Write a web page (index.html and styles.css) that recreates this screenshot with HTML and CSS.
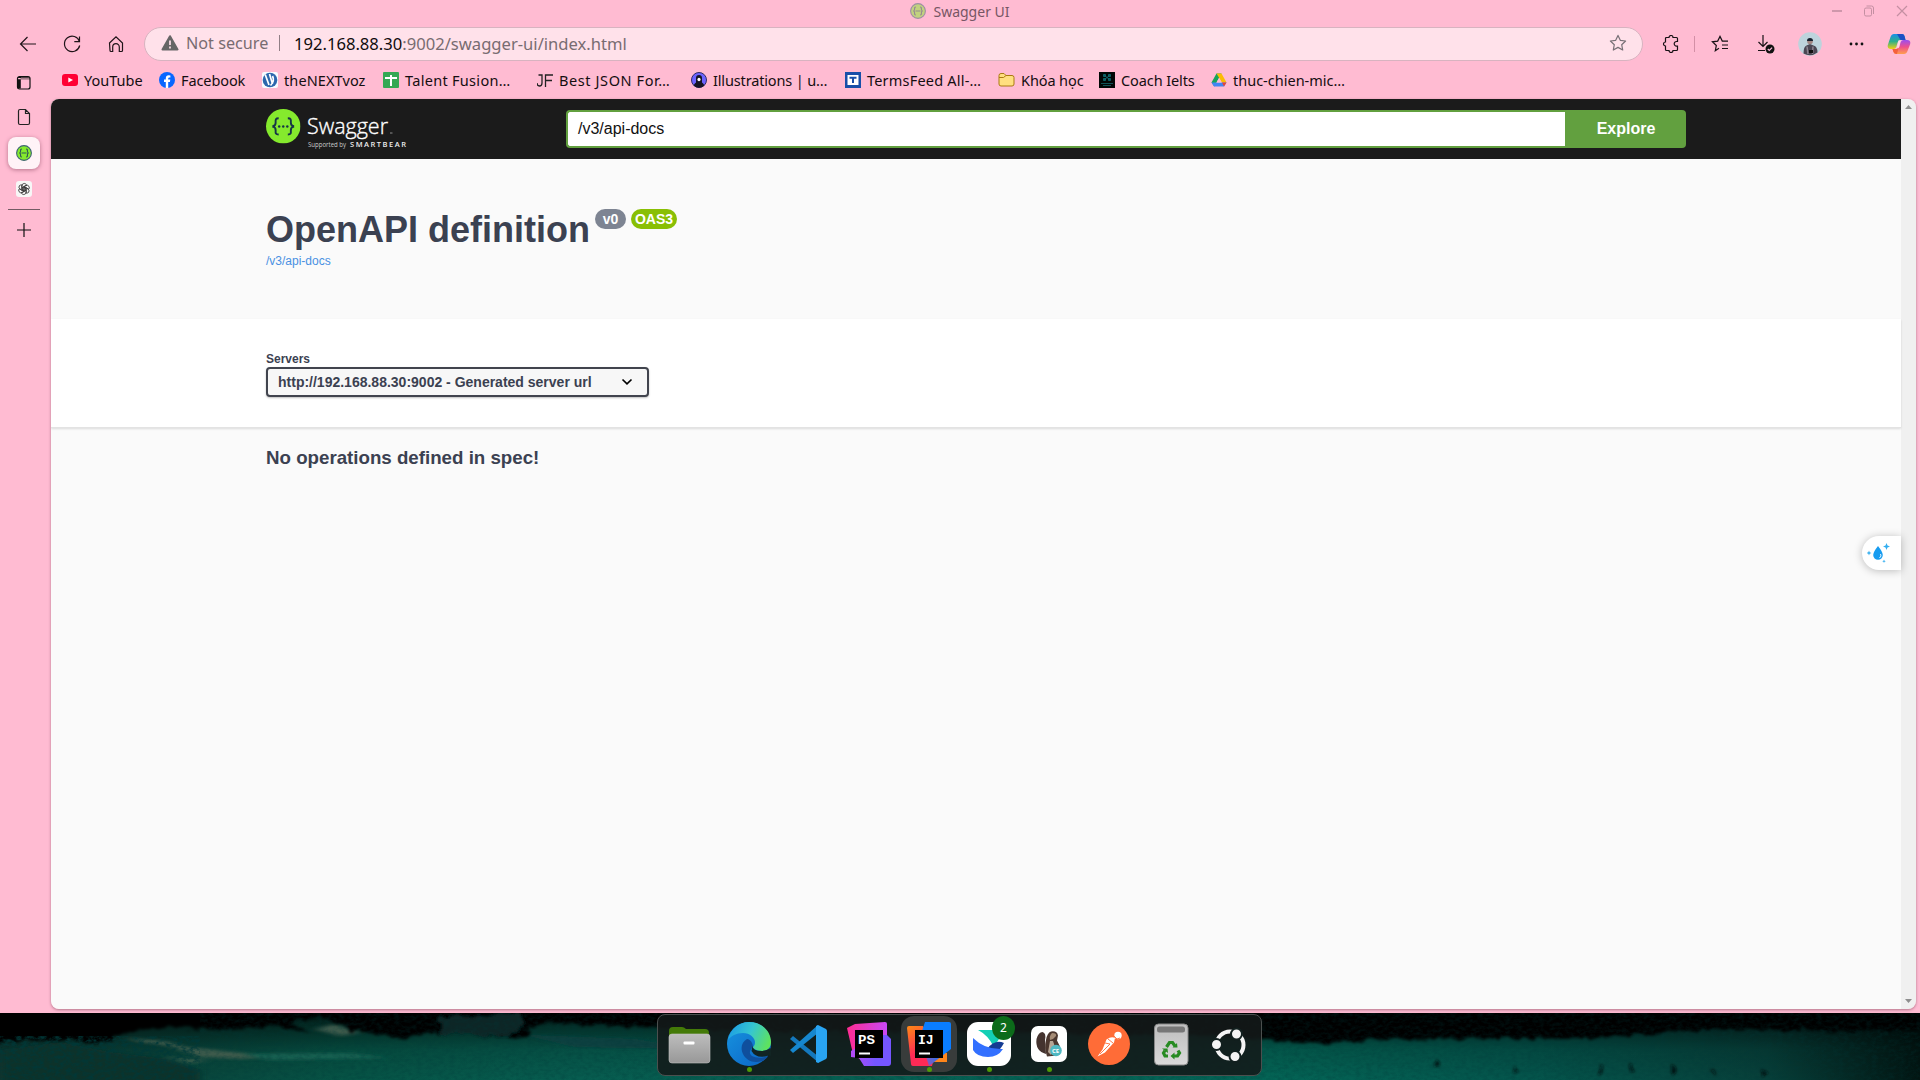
FILE: index.html
```html
<!DOCTYPE html>
<html lang="en">
<head>
<meta charset="utf-8">
<title>Swagger UI</title>
<link rel="stylesheet" href="styles.css">
</head>
<body>
<svg class="defs" width="0" height="0" aria-hidden="true">
  <defs>
    <symbol id="swagger" viewBox="0 0 34 34">
      <circle cx="17" cy="17" r="17" fill="#85ea2d"/>
      <path d="M12.5 9.2c-3 0-3.200 1.200-3 4 .1 2.400-.4 3.300-2.300 3.600v.8c1.900.3 2.400 1.200 2.300 3.600-.2 2.800 0 4 3 4M21.500 9.200c3 0 3.200 1.200 3 4-.1 2.400.4 3.300 2.300 3.600v.8c-1.900.3-2.400 1.200-2.300 3.600.2 2.800 0 4-3 4" fill="none" stroke="#173647" stroke-width="1.900"/>
      <g fill="#173647"><circle cx="13" cy="17.200" r="1.200"/><circle cx="17" cy="17.200" r="1.200"/><circle cx="21" cy="17.200" r="1.200"/></g>
    </symbol>
    <symbol id="swagger-tab" viewBox="0 0 16 16">
      <circle cx="8" cy="8" r="7.400" fill="#85ea2d" stroke="#3f6374" stroke-width="1.100"/>
      <path d="M6 4c-1.400 0-1.500.7-1.400 1.900C4.700 7.200 4.400 7.800 3.400 8c1 .2 1.300.8 1.200 2.100C4.500 11.300 4.600 12 6 12M10 4c1.400 0 1.500.7 1.400 1.900-.1 1.300.2 1.900 1.200 2.100-1 .2-1.300.8-1.200 2.100.1 1.200 0 1.900-1.400 1.900M5.500 8h5" fill="none" stroke="#315b54" stroke-width="1.200"/>
    </symbol>
    <linearGradient id="cop1" x1="0" y1="0" x2="0" y2="1"><stop offset="0" stop-color="#1b8fe8"/><stop offset=".5" stop-color="#2eb08a"/><stop offset="1" stop-color="#f2d011"/></linearGradient>
    <linearGradient id="cop2" x1="0" y1="0" x2="0" y2="1"><stop offset="0" stop-color="#9a4df0"/><stop offset=".5" stop-color="#f0508c"/><stop offset="1" stop-color="#ffa04c"/></linearGradient>
    <linearGradient id="edgeTop" x1="0" y1=".3" x2="1" y2=".6"><stop offset="0" stop-color="#1c9ee4"/><stop offset=".5" stop-color="#36c6d0"/><stop offset="1" stop-color="#5fe35b"/></linearGradient>
    <linearGradient id="edgeLow" x1="0" y1="0" x2="1" y2="1"><stop offset="0" stop-color="#1795e0"/><stop offset="1" stop-color="#0b62c4"/></linearGradient>
    <linearGradient id="ps1" x1="0" y1="0" x2="1" y2="0"><stop offset="0" stop-color="#ff2c91"/><stop offset="1" stop-color="#c948f7"/></linearGradient>
    <linearGradient id="ps2" x1="0" y1="0" x2="1" y2="0"><stop offset="0" stop-color="#b74af7"/><stop offset=".6" stop-color="#7556ff"/></linearGradient>
    <linearGradient id="ij1" x1="0" y1="0" x2=".4" y2="1"><stop offset="0" stop-color="#ff8a14"/><stop offset=".7" stop-color="#ff2a56"/></linearGradient>
    <linearGradient id="ij2" x1="1" y1="0" x2="0" y2="1"><stop offset=".5" stop-color="#0a7dff"/><stop offset=".85" stop-color="#8459c0"/><stop offset="1" stop-color="#fe2857"/></linearGradient>
    <linearGradient id="metal" x1="0" y1="0" x2="0" y2="1"><stop offset="0" stop-color="#bdbdbd"/><stop offset="1" stop-color="#989898"/></linearGradient>
    <linearGradient id="bin" x1="0" y1="0" x2="0" y2="1"><stop offset="0" stop-color="#bdbdbd"/><stop offset="1" stop-color="#dadada"/></linearGradient>
  </defs>
</svg>

<div class="browser">
  <header class="titlebar">
    <div class="title"><svg width="16" height="16"><use href="#swagger-tab"/></svg><span>Swagger UI</span></div>
    <svg class="window-buttons" width="80" height="16" viewBox="0 0 80 16" fill="none" stroke="#c48fa2">
      <path d="M4 8h10" stroke-width="1.600"/>
      <rect x="36.500" y="5" width="7" height="8" rx="1.500"/><path d="M38.500 3h5a2 2 0 0 1 2 2v6"/>
      <path d="M69 3l10 10M79 3L69 13" stroke-width="1.200"/>
    </svg>
  </header>

  <div class="toolbar">
    <svg class="nav" width="32" height="32" viewBox="0 0 32 32"><path d="M24 16H8.500M15.500 9l-7 7 7 7"/></svg>
    <svg class="nav" width="32" height="32" viewBox="0 0 32 32"><path d="M23.500 13.500a7.700 7.700 0 1 0 .2 4M23.500 8.500v5.200h-5.200"/></svg>
    <svg class="nav" width="32" height="32" viewBox="0 0 32 32"><path d="M9.500 15l6.500-6.200 6.500 6.200v7.500q0 1-1 1h-2.200v-4.500a3.300 3.300 0 0 0-6.600 0v4.500h-1.700q-1 0-1-1z"/></svg>
    <div class="address">
      <svg width="18" height="16" viewBox="0 0 18 16"><path d="M9 1.200L16.500 14.500h-15z" fill="#666" stroke="#666" stroke-width="2" stroke-linejoin="round"/><path d="M9 5.500v4.500M9 11.600v1.800" stroke="#ffe1ea" stroke-width="1.700"/></svg>
      <span class="security">Not secure</span>
      <span class="divider"></span>
      <span class="url"><b>192.168.88.30</b>:9002/swagger-ui/index.html</span>
      <svg class="star" width="18" height="18" viewBox="0 0 18 18"><path d="M9 1.400l2.300 4.900 5.300.7-3.900 3.700 1 5.300L9 13.400 4.300 16l1-5.300L1.400 7l5.300-.7z" fill="none" stroke="#777076" stroke-width="1.200" stroke-linejoin="round"/></svg>
    </div>
    <div class="actions">
      <svg class="puzzle" width="18" height="18" viewBox="0 0 18 18"><path d="M4.500 2.500H7a2 2 0 0 1 4 0h3.500q1 0 1 1V6.500h-1a2.300 2.300 0 1 0 0 4.600h1V14.500q0 1-1 1H11a2 2 0 0 1-4 0H4.500q-1 0-1-1V11a2 2 0 0 1 0-4V3.500q0-1 1-1z"/></svg>
      <span class="divider pinkish"></span>
      <svg class="favs" width="18" height="18" viewBox="0 0 18 18"><path d="M8 13.300l-3.700 2.500 1-5.300L1.400 6.800l5.300-.7L9 1.400l2.300 4.700H17M11 10h6M11 13.500h6"/></svg>
      <svg class="download" width="20" height="20" viewBox="0 0 20 20"><path d="M6 1v11M1.500 8L6 12.500 10.500 8M1 16.500h7"/><circle cx="13" cy="15" r="4.500" fill="#111" stroke="none"/><path d="M10.800 15l1.500 1.500 2.800-2.800" stroke="#fbd"/></svg>
      <svg class="avatar" width="24" height="24" viewBox="0 0 24 24"><circle cx="12" cy="12" r="11.800" fill="#bdd3dc" stroke="none"/><path d="M5.500 21.500q0-7 3-8l3.500-1.500 3.500 1.500q4 1 4 7-7 5-14 1z" fill="#4b4653" stroke="none"/><path d="M9 14.500l1 7.500M15 14.500l-.5 7.500" stroke="#8d8490" stroke-width="1.500"/><circle cx="12" cy="9.500" r="2.800" fill="#a08582" stroke="none"/><path d="M9 9a3 3 0 0 1 6 0z" fill="#16202e" stroke="none"/><path d="M11 18h4v3h-4z" fill="#111" stroke="none"/></svg>
      <svg class="more" width="16" height="6" viewBox="0 0 16 6"><g fill="#111" stroke="none"><circle cx="3" cy="3" r="1.400"/><circle cx="8.500" cy="3" r="1.400"/><circle cx="14" cy="3" r="1.400"/></g></svg>
      <svg class="copilot" width="24" height="22" viewBox="0 0 24 22"><g stroke="none"><path d="M7 1h8q2 0 2.500 2l1 4h-5q-2 0-2.700 2l-1.500 5q-.8 2-2.800 2H4q-4 0-3.200-4L3.500 4Q4.500 1 7 1z" fill="url(#cop1)"/><path d="M10 1h5q2 0 2.500 2l1 4h-5z" fill="#1c4fc4"/><path d="M17 21H9q-2 0-2.500-2l-1-3h4q2 0 2.700-2l1.500-5q.8-2 2.800-2H20q4 0 3.200 4L20.500 18Q19.500 21 17 21z" fill="url(#cop2)"/><path d="M5.500 16h4l2-1-1.500 6q-3 0-3.500-2z" fill="#f4603c"/><path d="M11.500 7.500h2L12 14.500h-2z" fill="#ffd9e4"/></g></svg>
    </div>
  </div>

  <div class="body">
    <aside class="tabs">
      <svg class="tabs-menu" width="16" height="16" viewBox="0 0 16 16"><rect x="1.500" y="1.500" width="12.500" height="12.500" rx="2" fill="none" stroke="#111" stroke-width="1.200"/><path d="M1.500 3v10.500h3.300V3zM2 2h12v2.200H2z" fill="#111"/><path d="M5 3.200h8.300" stroke="#ffbbd2" stroke-width=".9"/></svg>
      <svg class="page" width="14" height="18" viewBox="0 0 14 18"><path d="M3 1.500h5.500l4 4V15q0 1.500-1.500 1.500H3Q1.500 16.500 1.500 15V3Q1.500 1.500 3 1.500zM8.500 1.500v4h4" fill="none" stroke="#222" stroke-width="1.200"/></svg>
      <div class="active-tab"><svg width="16" height="16"><use href="#swagger-tab"/></svg></div>
      <svg class="gpt" width="16" height="16" viewBox="0 0 16 16"><rect width="16" height="16" rx="3" fill="#f7f7f7"/><g fill="none" stroke="#333" stroke-width=".8"><path id="petal" d="M6 9.200V5q0-2.600 2.200-2.600Q10 2.400 10.500 4L7 6v3"/><use href="#petal" transform="rotate(60 8 8)"/><use href="#petal" transform="rotate(120 8 8)"/><use href="#petal" transform="rotate(180 8 8)"/><use href="#petal" transform="rotate(240 8 8)"/><use href="#petal" transform="rotate(300 8 8)"/></g></svg>
      <span class="tabs-rule"></span>
      <svg class="plus" width="14" height="14" viewBox="0 0 14 14"><path d="M7 0v14M0 7h14" stroke="#111" stroke-width="1.200"/></svg>
    </aside>

    <div class="main">
      <nav class="bookmarks">
        <a class="bm yt"><svg width="16" height="16" viewBox="0 0 16 16"><rect y="2" width="16" height="12" rx="3" fill="#ff0033"/><path d="M6.300 5.500v5L11 8z" fill="#fff"/></svg>YouTube</a>
        <a class="bm fb"><svg width="16" height="16" viewBox="0 0 16 16"><circle cx="8" cy="8" r="8" fill="#0866ff"/><path d="M6.800 16V10H5V7.400h1.800V6.200q0-3 3-3 1 0 1.600.2v2.200h-1q-1.200 0-1.200 1v.8h2.100L10.900 10H9.200v6z" fill="#fff"/></svg>Facebook</a>
        <a class="bm voz"><svg width="16" height="16" viewBox="0 0 16 16"><rect width="16" height="16" rx="2" fill="#f8fbff"/><circle cx="8" cy="8" r="7.300" fill="#2c67ad"/><path d="M3.200 2.500L7 13M7.500 2L10.500 12M8.500 13.500Q13 9 10.500 4" fill="none" stroke="#fff" stroke-width="1.700"/></svg>theNEXTvoz</a>
        <a class="bm tf"><svg width="16" height="16" viewBox="0 0 16 16"><rect width="16" height="16" rx="1" fill="#34a853"/><path d="M2 6h12M8 3v11" stroke="#fff" stroke-width="2"/></svg>Talent Fusion…</a>
        <a class="bm jf"><svg width="16" height="16" viewBox="0 0 16 16"><path d="M0 11q0 3 2.500 3T5 11V3H1.500M8.500 15V3H16M8.500 8.500H15" fill="none" stroke="#222" stroke-width="1.300"/></svg>Best JSON For…</a>
        <a class="bm il"><svg width="16" height="16" viewBox="0 0 16 16"><circle cx="8" cy="8" r="7.500" fill="#6c63ff" stroke="#302d67"/><path d="M2.500 13.500Q4 11 5 10.500V6q0-3 3-3t3 3v4.500q1 .5 2.500 3Q8 18 2.500 13.500z" fill="#151525"/><ellipse cx="8" cy="7.500" rx="1.600" ry="1.800" fill="#fff"/></svg>Illustrations | u…</a>
        <a class="bm te"><svg width="16" height="16" viewBox="0 0 16 16"><rect width="16" height="16" fill="#184fa8"/><path d="M2.500 3h11v10h-11z" fill="#fff"/><path d="M4.500 5.800h7M8 5.800V11" stroke="#184fa8" stroke-width="2"/></svg>TermsFeed All-…</a>
        <a class="bm kh"><svg width="17" height="16" viewBox="0 0 17 16"><path d="M1 3.500Q1 1.500 3 1.500h3l2 2h6q2 0 2 2V12q0 2-2 2H3q-2 0-2-2z" fill="#ffdf80" stroke="#aa7b12"/><path d="M1 5.500h4.500l2.500-2" fill="none" stroke="#aa7b12"/></svg>Khóa học</a>
        <a class="bm co"><svg width="16" height="16" viewBox="0 0 16 16"><rect width="16" height="16" fill="#020707"/><path d="M5 3l6 5M11 3L5 8M4.500 2.500h2v2h-2zM9.500 2.500h2v2h-2zM4.500 6.500h2v2h-2zM9.500 6.500h2v2h-2z" fill="none" stroke="#127880" stroke-width=".8"/><path d="M2 11.500h12M4 13.500h8" stroke="#115257"/></svg>Coach Ielts</a>
        <a class="bm dr"><svg width="16" height="16" viewBox="0 0 16 16"><path d="M5.500 1.500h5L8 6 3.300 14.500 .5 10.500z" fill="#16a45a"/><path d="M5.500 1.500h5l5 9H11z" fill="#fbbc04"/><path d="M.5 10.500h15l-2.500 4H3z" fill="#4285f4"/><path d="M11 10.500h4.500l-2.500 4z" fill="#ea4335"/><path d="M8 6l2.500 4.500h-5z" fill="#ffbbd2"/></svg>thuc-chien-mic…</a>
      </nav>

      <div class="panel">
        <div class="page-view">
          <div class="topbar">
            <svg class="logo" width="150" height="44" viewBox="0 0 150 44">
              <use href="#swagger" x="0" y="0" width="34.500" height="34.500"/>
              <text class="logo-name" x="41" y="25" textLength="81" lengthAdjust="spacingAndGlyphs">Swagger</text>
              <path d="M124 24h2.500" stroke="#aaa" stroke-width=".8"/>
              <text class="logo-by" x="42" y="38" textLength="38" lengthAdjust="spacingAndGlyphs">Supported by</text>
              <text class="logo-bear" x="84" y="38" textLength="56">SMARTBEAR</text>
            </svg>
            <div class="spec-form"><div class="spec-url">/v3/api-docs</div><div class="explore">Explore</div></div>
          </div>
          <section class="info">
            <h2>OpenAPI definition</h2><span class="version">v0</span><span class="version oas">OAS3</span>
            <a class="spec-link">/v3/api-docs</a>
          </section>
          <section class="servers">
            <label>Servers</label>
            <div class="select"><span>http://192.168.88.30:9002 - Generated server url</span>
              <svg width="12" height="8" viewBox="0 0 12 8"><path d="M1.500 1.500L6 5.800l4.500-4.300" fill="none" stroke="#000" stroke-width="1.700"/></svg></div>
          </section>
          <h3 class="no-ops">No operations defined in spec!</h3>
          <div class="helper"><svg width="26" height="24" viewBox="0 0 26 24"><path d="M11 5q4.800 6 4.800 9a4.800 4.800 0 0 1-9.600 0q0-3 4.800-9z" fill="#179cf0"/><path d="M13.500 13q1.500 2-1 4" fill="none" stroke="#fff" stroke-width=".9"/><path d="M19.500 2l1 2.500 2.500 1-2.500 1-1 2.500-1-2.500-2.500-1 2.500-1zM2 9.500l.7 1.800 1.800.7-1.800.7L2 14.500l-.7-1.800L-.5 12l1.800-.7zM17 18.500l.5 1.300 1.300.5-1.300.5-.5 1.300-.5-1.300-1.300-.5 1.300-.5z" fill="#33aef0"/></svg></div>
        </div>
        <div class="scrollbar">
          <svg width="7" height="4" viewBox="0 0 7 4"><path d="M0 4L3.500 0 7 4z" fill="#8e8e8e"/></svg>
          <svg width="7" height="4" viewBox="0 0 7 4"><path d="M0 0L3.500 4 7 0z" fill="#8e8e8e"/></svg>
        </div>
      </div>
    </div>
  </div>
</div>

<footer class="desktop">
  <svg class="wallpaper" width="1920" height="67" viewBox="0 0 1920 67" preserveAspectRatio="none">
    <defs>
      <linearGradient id="lake" x1="0" y1="0" x2="1" y2="0"><stop offset="0" stop-color="#0b3a34"/><stop offset=".12" stop-color="#084a3f"/><stop offset=".18" stop-color="#065446"/><stop offset=".3" stop-color="#075d50"/><stop offset=".66" stop-color="#046556"/><stop offset=".8" stop-color="#04554c"/><stop offset=".92" stop-color="#07403a"/><stop offset="1" stop-color="#021512"/></linearGradient>
      <linearGradient id="dusk" x1="0" y1="0" x2="0" y2="1"><stop offset="0" stop-color="#000" stop-opacity=".7"/><stop offset=".55" stop-color="#000" stop-opacity=".15"/><stop offset="1" stop-color="#000" stop-opacity="0"/></linearGradient>
      <filter id="rough" x="-2%" y="-20%" width="104%" height="140%"><feTurbulence type="fractalNoise" baseFrequency=".09 .12" numOctaves="3" seed="4"/><feDisplacementMap in="SourceGraphic" scale="9" xChannelSelector="R" yChannelSelector="G"/><feGaussianBlur stdDeviation="1.500"/></filter>
      <filter id="soft" x="-10%" y="-50%" width="120%" height="200%"><feGaussianBlur stdDeviation="4 1.500"/></filter>
      <filter id="grain" x="0" y="0" width="100%" height="100%"><feTurbulence type="fractalNoise" baseFrequency=".18 .3" numOctaves="4" seed="9"/><feColorMatrix values="0 0 0 0 0  0 0 0 0 .04  0 0 0 0 .04  2.400 0 0 0 -.9"/></filter>
    </defs>
    <rect width="1920" height="67" fill="url(#lake)"/>
    <rect width="1920" height="67" fill="url(#dusk)"/>
    <g filter="url(#soft)">
      <path d="M315 16l20-5 25 9-20 3zM125 25l40 3 20 6 50 5 25 3 30 1-50 3-40-2-30-11-30-4z" fill="#3e5a4b"/>
      <path d="M165 43l20 3 25 1-20 3z" fill="#45604e"/>
      <path d="M240 41l110-1 40 5-120 2z" fill="#176151"/>
      <path d="M525 22l110 4 60 10-120-2z" fill="#103f3f"/>
      <path d="M0 37l60-8 50 10 50 6 40 12v16H0z" fill="#0a302c"/>
    </g>
    <g filter="url(#rough)">
      <path d="M-20-20H1940V16L1850 18 1720 16 1640 21 1580 26 1500 25 1370 26 1330 31 1270 27 1220 22 1100 20 800 18 680 16 600 12 540 9 520 26 500 24 440 20 400 25 350 16 320 4 290 8 310 20 270 12 230 17 160 14 130 19 100 30 60 26-20 30z" fill="#000403"/>
      <path d="M440 5l80-4 5 10-15 12-70-2z" fill="#0b2627"/>
      <path d="M1435 49l3 3-3 1zM1515 54l3 3-3 1zM1600 52l2 7-2 1zM1631 52l3 6-3 1zM1672 53l3 5-3 1zM1710 57l4 3zM1762 57l4 4-4 1z" fill="#02110f" stroke="#02110f" stroke-width="1.500"/>
    </g>
    <rect width="200" height="44" y="23" filter="url(#grain)" opacity=".9"/>
    <rect width="1720" height="67" x="200" filter="url(#grain)" opacity=".25"/>
  </svg>

  <div class="dock">
    <div class="app"><svg width="44" height="44" viewBox="0 0 44 44"><path d="M2 9q0-4 4-4h9q2 0 4 2h19q4 0 4 4v8H2z" fill="#447a08"/><rect x="2" y="12" width="41" height="29" rx="3" fill="url(#metal)" stroke="#c4c4c4" stroke-width=".6"/><rect x="16.500" y="19.500" width="11" height="3" rx="1" fill="#fff"/></svg></div>
    <div class="app running"><svg width="44" height="44" viewBox="0 0 44 44"><circle cx="22" cy="22" r="22" fill="url(#edgeLow)"/><path d="M1 18C3 8 11 0 22 0c13 0 22 9 22 20 0 6-4 9-9 9-6 0-9-3-9-4 1-1 2-2 2-5 0-4-5-9-12-9-7 0-12 3-15 7z" fill="url(#edgeTop)"/><path d="M26 25c0-4-3-8-6-8-5 3-7 8-4 15 3 6 10 10 19 7 3-1 6-4 6-5-12 5-24-1-15-9z" fill="#0f4f9d"/><path d="M25.500 24q0 5 9.500 5 4 0 8.500-3l1 8-3-.5q-12 4-17-4.500z" fill="#122524"/></svg></div>
    <div class="app"><svg width="44" height="44" viewBox="0 0 44 44"><path d="M3 17l3-3L32 35v6z" fill="#1478bd"/><path d="M3 28L31 3v8L6 31z" fill="#1687cf"/><path d="M31 3l8 4q1 1 1 2v26q0 1-1 2l-8 4-2-1V4z" fill="#29a4f2"/></svg></div>
    <div class="app"><svg width="44" height="44" viewBox="0 0 44 44"><path d="M0 6L8 2 38 0q2 0 2 2v14L14 38 6 32z" fill="url(#ps1)"/><path d="M28 13h12l4 4v24q0 3-3 3H17L12 36 4 35v-6z" fill="url(#ps2)"/><rect x="8" y="8" width="28" height="28" fill="#000"/><text class="ide" x="11" y="21.500" textLength="17" lengthAdjust="spacingAndGlyphs">PS</text><path d="M12 31.500h11" stroke="#fff" stroke-width="2"/></svg></div>
    <div class="app running current"><svg width="44" height="44" viewBox="0 0 44 44"><path d="M28 31h12v9H26z" fill="#ff851a"/><path d="M0 6q0-2 2-2h14l12 28-3 12H6q-2 0-2-2z" fill="url(#ij1)"/><path d="M18 0h24q2 0 2 2v25L22 44 13 15z" fill="url(#ij2)"/><rect x="8" y="8" width="28" height="28" fill="#000"/><text class="ide" x="11" y="21.500">IJ</text><path d="M12 31.500h11" stroke="#fff" stroke-width="2"/></svg></div>
    <div class="app running"><svg width="44" height="44" viewBox="0 0 44 44"><rect width="44" height="44" rx="11" fill="#fff"/><path d="M11 8h17l4 9-5 8Q21 13 11 8z" fill="#14cfb5"/><path d="M20 27q8-10 17-6-4 7-7 9z" fill="#153c93"/><path d="M6 16q12 12 30 11-5 8-15 8-11 0-15-7z" fill="#3370ff"/></svg><span class="badge">2</span></div>
    <div class="app running"><svg width="44" height="44" viewBox="0 0 44 44"><rect x="4" y="4" width="36" height="36" rx="7" fill="#fff"/><path d="M19 32Q8 29 9.500 17q2-7 6-7 4 1 2.500 8z" fill="#44332f"/><path d="M19 18q1-7 5-8.500 6-1 7 4l-1 5 3 6-3 9-10 1q-3-9-1-16.500z" fill="#4b372f"/><path d="M25 11q5 0 4 3-2 3-6 4-1-4 2-7z" fill="#a58c76"/><path d="M23 19l-2 11 3 3 4-8-2-6z" fill="#b5a595"/><circle cx="29" cy="28.500" r="5.800" fill="#4fb8c2"/><text class="ce" x="25" y="31">CE</text></svg></div>
    <div class="app"><svg width="44" height="44" viewBox="0 0 44 44"><circle cx="22" cy="22" r="21" fill="#ff6c37"/><circle cx="31" cy="13.500" r="3.700" fill="#fff"/><path d="M19.500 17.500q5-3.500 8.500-1.500l-1 4.500-9 10-7.500 4 5-7z" fill="#fff"/><path d="M27 14l3 3 3-1M18 21l5 1-10 10M21 17l5 4" fill="none" stroke="#ff6c37" stroke-width=".9"/></svg></div>
    <span class="dock-rule"></span>
    <div class="app"><svg width="44" height="44" viewBox="0 0 44 44"><rect x="5.500" y="2" width="33.500" height="41" rx="4" fill="url(#bin)" stroke="#888"/><rect x="8" y="4.500" width="28" height="6" rx="2.500" fill="#777"/><path d="M17.500 25l3-4.500h3l2.500 3.500M29 28.500l1.500 2.500-2 3h-4M19 34h-3l-1.500-3 1.500-2.500" fill="none" stroke="#278b22" stroke-width="3.200"/><path d="M23.500 25.500h5l-.5-4.500zM25.500 30.500v7l-4-3.500zM13 26.500h5.500l.5 4.500z" fill="#278b22"/></svg></div>
    <div class="app"><svg width="44" height="44" viewBox="0 0 44 44"><circle cx="22" cy="23" r="13.500" fill="none" stroke="#f4f4f4" stroke-width="4"/><g fill="#f4f4f4" stroke="#12201f" stroke-width="2"><circle cx="8.500" cy="22.500" r="5.500"/><circle cx="28.500" cy="12" r="5.500"/><circle cx="27" cy="34.500" r="5.500"/></g></svg></div>
  </div>
</footer>
</body>
</html>
```
FILE: styles.css
```css
* { box-sizing: border-box; }
body { margin: 0; width: 1920px; height: 1080px; overflow: hidden; font-family: "Noto Sans", "Open Sans", sans-serif; color: #1d1519; }
svg { display: block; flex: none; }
.defs { position: absolute; }

.browser { height: 1013px; background: #ffbbd2; display: flex; flex-direction: column; }
.titlebar { height: 27px; flex: none; display: grid; grid-template-columns: 1fr auto 1fr; padding: 3px 12px 0 12px; }
.title { grid-column: 2; display: flex; gap: 7px; font-size: 14px; line-height: 17px; color: #765664; height: 17px; }
.title svg { opacity: .5; }
.window-buttons { grid-column: 3; justify-self: end; }

.toolbar { height: 34px; flex: none; display: flex; align-items: center; padding-left: 12px; }
.nav { margin-right: 12px; fill: none; stroke: #201419; stroke-width: 1.200; }
.address { width: 1499px; height: 34px; flex: none; border: 1px solid #d8b3c0; border-radius: 17px; background: #ffe1ea; display: flex; align-items: center; padding: 0 15px 2px 16px; font-size: 16.200px; white-space: nowrap; }
.security { margin-left: 7px; width: 83px; color: #786c71; }
.divider { width: 1px; height: 16px; background: #917f86; margin-left: 10px; }
.url { margin-left: 14px; color: #786c71; font-size: 16.600px; }
.url b { font-weight: 400; color: #100b0d; }
.star { margin-left: auto; }
.actions { flex: 1; display: flex; align-items: center; fill: none; stroke: #171014; stroke-width: 1.200; }
.puzzle { margin-left: 19px; }
.pinkish { background: #d38fa6; margin-left: 14px; }
.favs { margin-left: 16px; }
.download { margin-left: 28px; }
.avatar { margin-left: 21px; }
.more { margin-left: 26px; }
.copilot { margin-left: 23px; }

.body { flex: 1; display: flex; min-height: 0; }
.tabs { width: 51px; flex: none; display: flex; flex-direction: column; align-items: center; padding: 14px 4px 0 0; }
.tabs-menu { margin-bottom: 17px; }
.page { margin-bottom: 11px; }
.active-tab { width: 32px; height: 32px; border-radius: 8px; background: #fff3f7; box-shadow: 0 1px 4px #b6738b; display: grid; place-items: center; margin-bottom: 12px; }
.tabs-rule { width: 32px; height: 1px; background: #735b64; margin: 12px 0 13px; }
.main { width: 1865px; flex: none; display: flex; flex-direction: column; }
.bookmarks { height: 38px; flex: none; display: flex; align-items: center; padding: 0 0 0 11px; }
.bm { display: flex; align-items: center; gap: 6px; flex: none; font-size: 14.500px; line-height: 20px; white-space: nowrap; color: #150e11; }
.yt { width: 97px; }
.fb { width: 103px; letter-spacing: -.1px; }
.voz { width: 121px; letter-spacing: .1px; }
.tf { width: 154px; letter-spacing: .3px; }
.jf { width: 154px; letter-spacing: .6px; }
.il { width: 154px; letter-spacing: -.15px; }
.te { width: 153px; letter-spacing: .2px; }
.kh { width: 101px; letter-spacing: -.1px; }
.co { width: 112px; letter-spacing: -.1px; }

.panel { height: 910px; flex: none; display: flex; border-radius: 8px; overflow: hidden; box-shadow: 0 1px 3px #b07589; font-family: "Liberation Sans", Arial, sans-serif; color: #3b4151; }
.page-view { flex: 1; background: #fafafa; position: relative; }
.scrollbar { width: 15px; background: #f0f0f0; display: flex; flex-direction: column; align-items: center; justify-content: space-between; padding: 6px 0; }
.topbar { height: 60px; background: #1b1b1b; padding: 10px 0 0 215px; display: flex; }
.logo { margin-right: 150px; }
.logo-name { font: 300 22px "Open Sans", sans-serif; fill: #fff; stroke: #fff; stroke-width: .35px; }
.logo-by { font: 6.600px "Open Sans", sans-serif; fill: #ccc; }
.logo-bear { font: 600 7.500px "Open Sans", sans-serif; fill: #eee; }
.spec-form { display: flex; height: 38px; margin-top: 1px; }
.spec-url { width: 999px; border: 2px solid #62a03f; border-right: 0; border-radius: 4px 0 0 4px; background: #fff; color: #111; font-size: 16px; line-height: 33px; padding-left: 10px; }
.explore { width: 121px; border-radius: 0 4px 4px 0; background: #62a03f; color: #fff; font-weight: 700; font-size: 16px; line-height: 37px; text-align: center; padding-left: 1px; }
.info { height: 160px; padding: 50px 0 0 215px; display: flex; flex-wrap: wrap; align-content: flex-start; align-items: flex-start; }
.info h2 { margin: 0; font-size: 36px; line-height: 42px; width: 329px; white-space: nowrap; }
.version { width: 31px; height: 20px; border-radius: 20px; background: #7d8492; color: #fff; font-size: 14px; font-weight: 700; line-height: 20px; text-align: center; margin-right: 5px; }
.oas { width: 46px; background: #89bf04; }
.spec-link { width: 100%; font-size: 12px; line-height: 14px; color: #4990e2; margin-top: 3px; }
.servers { height: 109px; background: #fff; padding: 32px 0 0 215px; box-shadow: 0 1px 2px rgba(0,0,0,.12); border-bottom: 1px solid #e3e3e3; }
.servers label { display: block; font-size: 12px; line-height: 16px; font-weight: 700; }
.select { width: 383px; height: 30px; border: 2px solid #41444e; border-radius: 4px; background: #f7f7f7; box-shadow: 0 1px 2px rgba(0,0,0,.25); display: flex; align-items: center; justify-content: space-between; font-size: 14px; font-weight: 700; padding: 0 14px 0 10px; }
.no-ops { margin: 18px 0 0 215px; font-size: 18.720px; line-height: 23px; }
.helper { position: absolute; right: 0; top: 437px; width: 39px; height: 34px; border-radius: 17px 0 0 17px; background: #fff; box-shadow: 0 1px 8px rgba(0,0,0,.25); padding: 5px; }

.desktop { height: 67px; display: grid; grid-template: 67px / 1920px; background: #021; }
.wallpaper, .dock { grid-area: 1 / 1; }
.dock { justify-self: start; z-index: 1; width: 605px; height: 62px; margin: 1px 0 0 657px; border: 1px solid #4b4f4e; border-radius: 8px; background: rgba(19,25,25,.87); display: flex; align-items: center; padding: 0 0 2px 3px; }
.app { position: relative; width: 56px; height: 56px; margin-right: 4px; flex: none; border-radius: 13px; display: grid; place-items: center; }
.current { background: #383c3b; }
.running::after { content: ""; position: absolute; width: 5px; height: 5px; border-radius: 50%; background: #4e9a06; left: 25.500px; bottom: 0; }
.ide { font: 700 13px "Liberation Mono", monospace; fill: #fff; }
.ce { font: 700 6px "Open Sans", sans-serif; fill: #fff; }
.badge { position: absolute; left: 31px; top: 0; width: 23px; height: 24px; border-radius: 50%; background: #0c6b1a; color: #fff; font-size: 12px; line-height: 24px; text-align: center; }
.dock-rule { width: 1px; height: 44px; background: #555a59; margin: 0 3px 0 -1px; }
.dock-rule ~ .app { margin-right: 3px; }
```
